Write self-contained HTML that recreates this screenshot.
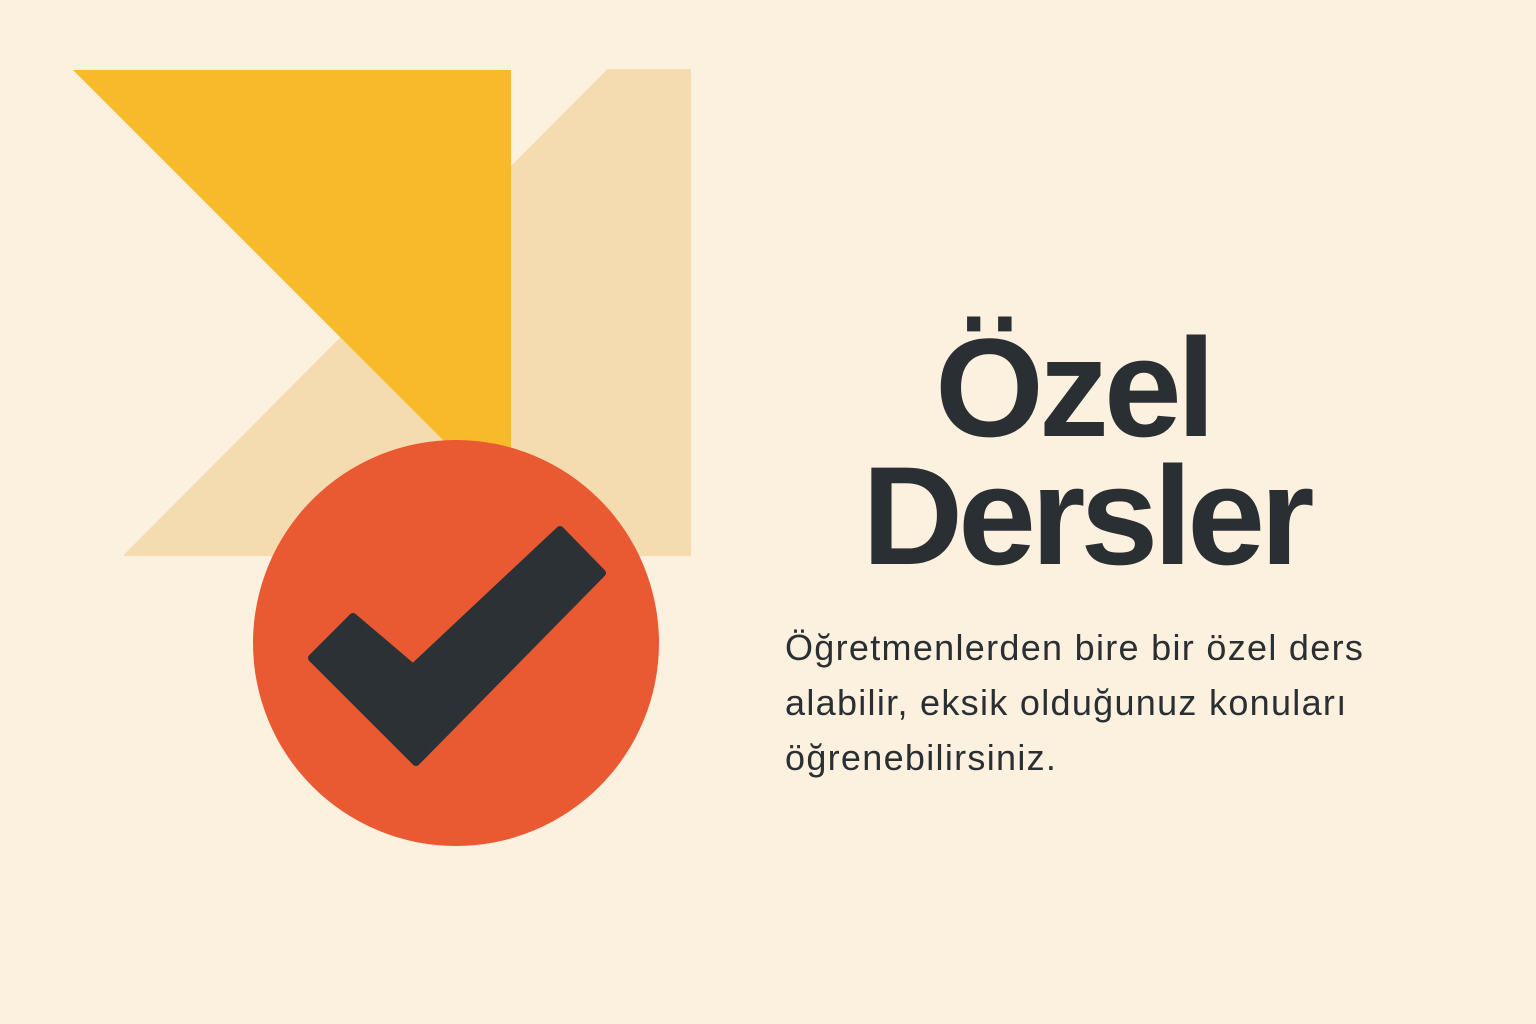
<!DOCTYPE html>
<html><head><meta charset="utf-8"><style>
html,body{margin:0;padding:0}
body{width:1536px;height:1024px;background:#fcf0de;position:relative;overflow:hidden;font-family:"Liberation Sans",sans-serif}
svg{position:absolute;left:0;top:0}
.t{position:absolute;color:#2a2f33;font-weight:bold;font-size:140px;letter-spacing:-5px;line-height:1;white-space:nowrap}
.p{position:absolute;left:785px;top:620px;color:#2a2f33;font-size:36px;letter-spacing:1.3px;line-height:55px;white-space:nowrap}
</style></head><body>
<svg width="1536" height="1024">
<polygon points="608,70 690,70 690,555 125,555" fill="#f5dcb0" stroke="#f5dcb0" stroke-width="2" stroke-linejoin="round"/>
<polygon points="73,70 511,70 511,508" fill="#f8b92a"/>
<circle cx="456" cy="643" r="203" fill="#ea5a32"/>
<polygon points="353,617 312,658 416,762 602,573 560,530 413,668" fill="#2b3134" stroke="#2b3134" stroke-width="8" stroke-linejoin="round"/>
</svg>
<div class="t" style="left:935px;top:318px">Özel</div>
<div class="t" style="left:862px;top:446px">Dersler</div>
<div class="p">Öğretmenlerden bire bir özel ders<br>alabilir, eksik olduğunuz konuları<br>öğrenebilirsiniz.</div>
</body></html>
